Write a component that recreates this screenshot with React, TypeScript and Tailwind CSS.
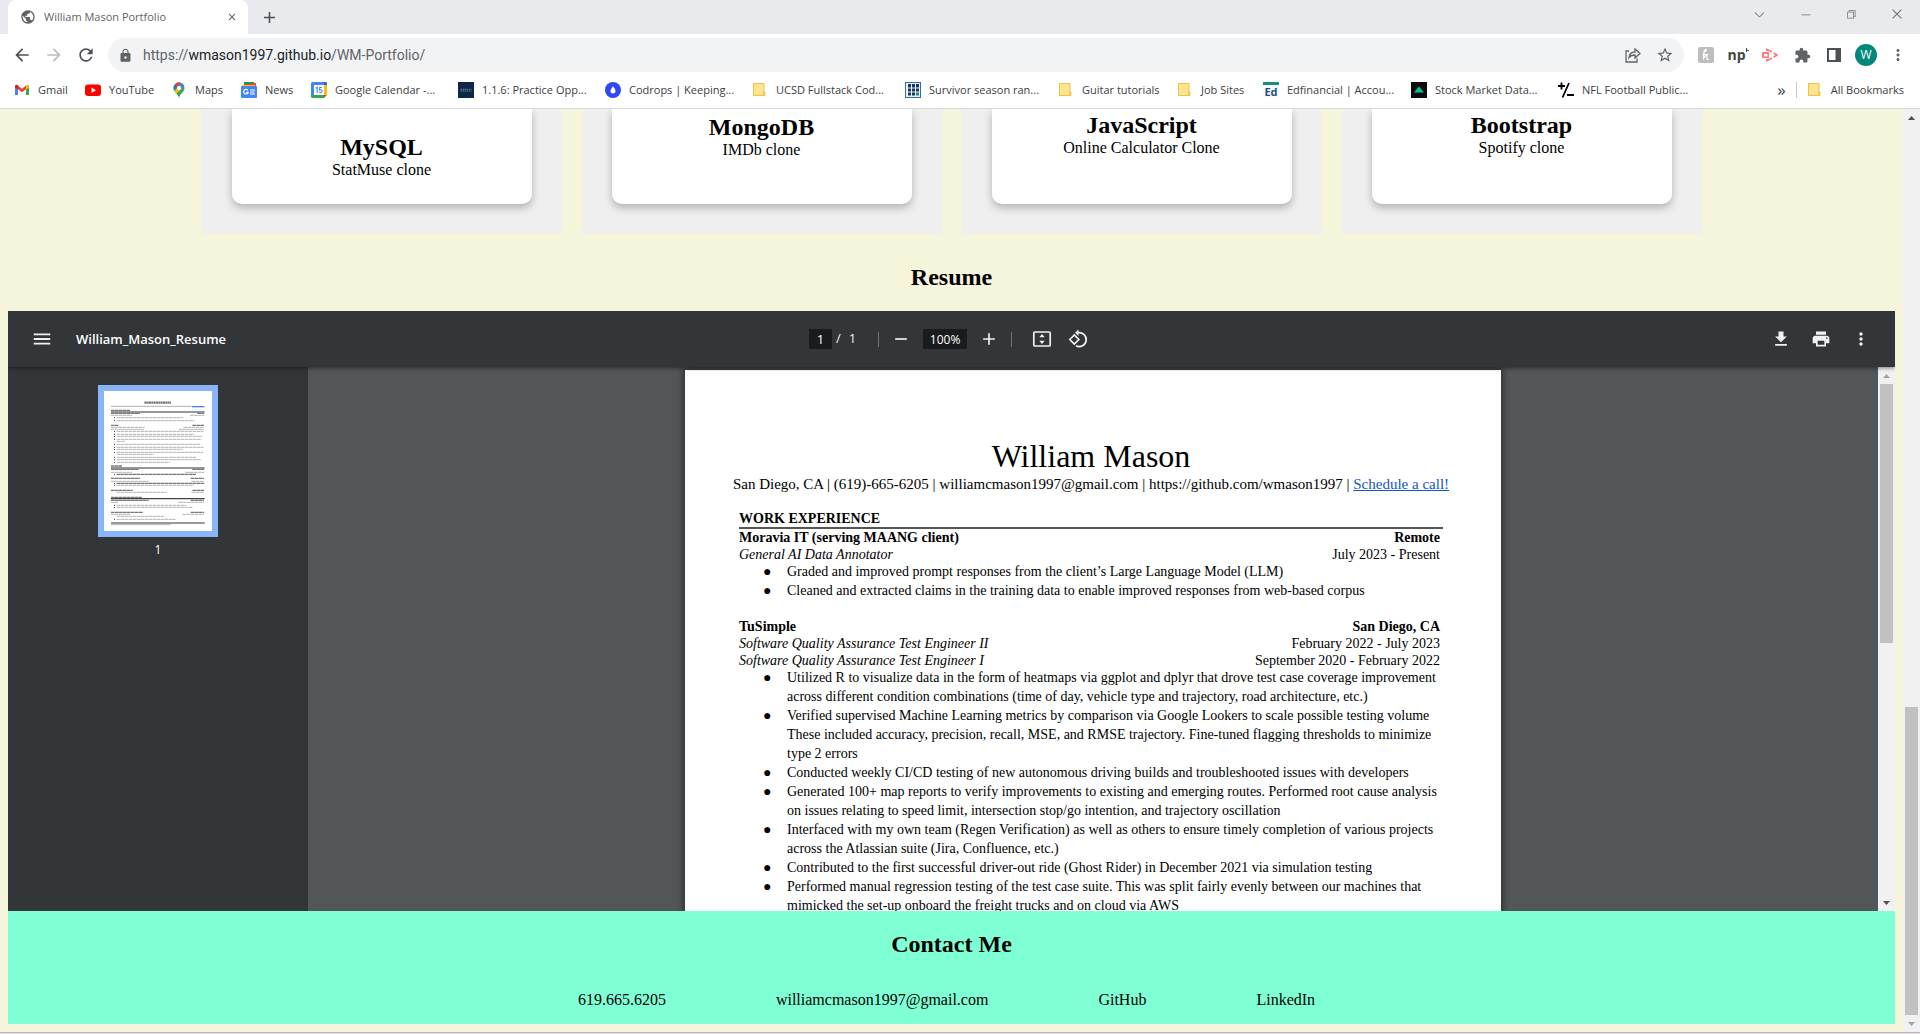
import React from "react";
import { VscChromeClose, VscChromeMinimize, VscChromeRestore, VscChevronDown } from "react-icons/vsc";
import { MdPublic, MdLock, MdArrowBack, MdArrowForward, MdRefresh, MdStarBorder, MdExtension, MdMoreVert, MdClose, MdAdd, MdMenu, MdRemove, MdPrint, MdDownload } from "react-icons/md";

/* ---------- bookmark icons ---------- */

const Gmail = () => (
  <svg width="16" height="16" viewBox="0 0 16 16">
    <path d="M1 4v9h3V7z" fill="#4285f4" />
    <path d="M15 4v9h-3V7z" fill="#34a853" />
    <path d="M1 4.5A1.5 1.5 0 0 1 3.500 3.300L8 6.700l4.500-3.400A1.500 1.500 0 0 1 15 4.500L12 7.200 8 10.200 4 7.200z" fill="#ea4335" />
    <path d="M12 3.700A1.600 1.600 0 0 1 15 4.500V5.500L12 7.600z" fill="#fbbc04" />
    <path d="M1 4.500A1.600 1.600 0 0 1 4 3.700V7.600L1 5.500z" fill="#c5221f" />
  </svg>
);
const YouTube = () => (
  <svg width="16" height="16" viewBox="0 0 16 16">
    <rect y="2.500" width="16" height="11.500" rx="3" fill="#f00" />
    <path d="M6.500 5.500v5.500l4.500-2.700z" fill="#fff" />
  </svg>
);
const Maps = () => (
  <svg width="16" height="16" viewBox="0 0 16 16">
    <path d="M8 .5a5.500 5.500 0 0 1 5.500 5.500c0 4-4.500 5.500-5.500 10C7 11.500 2.500 10 2.500 6A5.500 5.500 0 0 1 8 .5z" fill="#34a853" />
    <path d="M3.800 2.500A5.500 5.500 0 0 1 10 .8L5.500 6z" fill="#ea4335" />
    <path d="M10 .8A5.500 5.500 0 0 1 13.200 4L9 8.500 7 4.500z" fill="#4285f4" />
    <path d="M3.500 9L8.500 4l2 3-5.500 5z" fill="#fbbc04" />
    <path d="M3.800 2.500L6 5 2.900 8A5.500 5.500 0 0 1 3.800 2.500z" fill="#1a73e8" />
    <circle cx="8" cy="6" r="2" fill="#fff" />
  </svg>
);
const News = () => (
  <svg width="16" height="16" viewBox="0 0 16 16">
    <path d="M3 0h10v5H3z" fill="#0c9d58" />
    <path d="M4 2l11-1v5H4z" fill="#ea4335" />
    <path d="M1 3l13 0v4H1z" fill="#ffc107" />
    <rect y="4" width="16" height="12" rx="1" fill="#4285f4" />
    <path d="M6.800 8.300A2.300 2.300 0 1 0 7.200 10.300H5.300M9 8h5M9 10h4.500M9 12h5" fill="none" stroke="#fff" strokeWidth="1.200" />
  </svg>
);
const Calendar = () => (
  <svg width="16" height="16" viewBox="0 0 16 16">
    <path d="M0 1.500A1.500 1.500 0 0 1 1.500 0H14.500A1.500 1.500 0 0 1 16 1.500V3H0z" fill="#4285f4" />
    <path d="M0 2h3v11H0z" fill="#4285f4" />
    <path d="M13 3h3v10h-3z" fill="#fbbc04" />
    <path d="M0 13h13v3H1.500A1.500 1.500 0 0 1 0 14.500z" fill="#34a853" />
    <path d="M13 13h3l-3 3z" fill="#ea4335" />
    <path d="M13 0h1.500A1.500 1.500 0 0 1 16 1.500V3h-3z" fill="#1967d2" />
    <rect x="3" y="3" width="10" height="10" fill="#fff" />
    <path d="M4.700 6.200l1.500-1V11M11 5.500H8.700L8.500 8c2-.8 2.700.2 2.600 1.300-.2 1.600-2.300 1.600-2.900.4" fill="none" stroke="#4285f4" strokeWidth="1.100" />
  </svg>
);
const Practice = () => (
  <svg width="16" height="16" viewBox="0 0 16 16">
    <rect width="16" height="16" fill="#0f2747" />
    <path d="M2.500 7.300h11M2.500 9h11" stroke="#8c9aae" strokeWidth=".8" strokeDasharray="1.500 .6" />
  </svg>
);
const Codrops = () => (
  <svg width="16" height="16" viewBox="0 0 16 16">
    <circle cx="8" cy="8" r="8" fill="#3047f5" />
    <path d="M8 4c1 2 2.500 3.300 2.500 5a2.500 2.500 0 0 1-5 0C5.500 7.300 7 6 8 4z" fill="#fff" />
  </svg>
);
const Folder = () => (
  <svg width="16" height="16" viewBox="0 0 16 16">
    <path d="M1.500 1.500h10.500v8.500h1v3.500h-11.500z" fill="#ffe48f" stroke="#e8c44a" />
    <path d="M11.500 13.500v-3.500h1" fill="none" stroke="#e8c44a" />
  </svg>
);
const Survivor = () => (
  <svg width="16" height="16" viewBox="0 0 16 16">
    <rect width="16" height="16" fill="#2f6bbd" />
    <rect x="1" y="1" width="14" height="14" fill="#f3efe4" />
    <path d="M3 2h3v3.500H3zM7 2h3v3.500H7zM11 2h3v3.500h-3zM3 6.500h3v3H3zM7 6.500h3v3H7zM11 6.500h3v3h-3zM3 10.500h3v3H3zM7 10.500h3v3H7z" fill="#0b3a6b" />
    <path d="M11 10.500h3v3h-3z" fill="#12907f" />
  </svg>
);
const Ed = () => (
  <span className="flex size-4 flex-col bg-slate-50">
    <span className="h-[3px] bg-[#16907a]" />
    <span className="text-center font-['Open_Sans'] text-[11px] leading-[13px] font-bold text-[#1d4f86]">Ed</span>
  </span>
);
const Stock = () => (
  <svg width="16" height="16" viewBox="0 0 16 16">
    <rect width="16" height="16" fill="#0c0c0c" />
    <path d="M8 4.500l5 6H3z" fill="#00c79a" />
  </svg>
);
const Nfl = () => (
  <svg width="16" height="16" viewBox="0 0 16 16">
    <path d="M0 4h7M3.500.5v7M11 1L4.500 15.500M9 13h7" stroke="#000" strokeWidth="1.800" />
  </svg>
);

const bookmarks: { label: string; icon: React.ReactNode; w: string }[] = [
  { label: "Gmail", icon: <Gmail />, w: "w-[71px]" },
  { label: "YouTube", icon: <YouTube />, w: "w-[86px]" },
  { label: "Maps", icon: <Maps />, w: "w-[70px]" },
  { label: "News", icon: <News />, w: "w-[70px]" },
  { label: "Google Calendar -...", icon: <Calendar />, w: "w-[147px]" },
  { label: "1.1.6: Practice Opp...", icon: <Practice />, w: "w-[147px]" },
  { label: "Codrops | Keeping...", icon: <Codrops />, w: "w-[147px]" },
  { label: "UCSD Fullstack Cod...", icon: <Folder />, w: "w-[153px]" },
  { label: "Survivor season ran...", icon: <Survivor />, w: "w-[153px]" },
  { label: "Guitar tutorials", icon: <Folder />, w: "w-[119px]" },
  { label: "Job Sites", icon: <Folder />, w: "w-[86px]" },
  { label: "Edfinancial | Accou...", icon: <Ed />, w: "w-[148px]" },
  { label: "Stock Market Data...", icon: <Stock />, w: "w-[147px]" },
  { label: "NFL Football Public...", icon: <Nfl />, w: "w-[147px]" },
];

function Browser() {
  return (
    <header className="shrink-0 border-b border-[#d5d7da] bg-white font-['Open_Sans',sans-serif] text-[#3c4043]">
      <div className="flex h-[34px] bg-[#e8eaed] pl-2">
        <div className="flex w-60 items-center rounded-t-lg bg-white pr-2.5 pl-3 text-[11px] text-[#5f6368]">
          <MdPublic size={16} />
          <span className="ml-2 flex-1 whitespace-nowrap">William Mason Portfolio</span>
          <button aria-label="Close tab"><MdClose size={12} /></button>
        </div>
        <button aria-label="New tab" className="ml-3 text-[#4d5156]"><MdAdd size={19} /></button>
        <div className="ml-auto flex items-start text-[#707478]">
          {[
            ["Search tabs", <VscChevronDown size={15} />],
            ["Minimise", <VscChromeMinimize size={13} />],
            ["Restore", <VscChromeRestore size={12} />],
            ["Close", <VscChromeClose size={14} />],
          ].map(([n, i]) => (
            <button key={n as string} aria-label={n as string} className="flex h-7 w-[46px] items-center justify-center">{i}</button>
          ))}
        </div>
      </div>
      <div className="flex h-[38px] items-center pr-1.5">
        <div className="flex w-[108px] gap-3 pt-1 pl-3 text-[#4d5156]">
          <button aria-label="Back"><MdArrowBack size={20} /></button>
          <button aria-label="Forward" className="text-[#babcbe]"><MdArrowForward size={20} /></button>
          <button aria-label="Reload"><MdRefresh size={20} /></button>
        </div>
        <div className="mt-1 flex h-[34px] flex-1 items-center rounded-full bg-[#f1f3f4] pr-2.5 pl-2.5 text-[#5f6368]">
          <MdLock size={15} />
          <a href="#top" className="ml-2.5 flex-1 font-['Roboto',sans-serif] text-[14px]">
            https://<span className="text-[#202124]">wmason1997.github.io</span>/WM-Portfolio/
          </a>
          <button aria-label="Share" className="mr-3.5">
            <svg width="18" height="18" viewBox="0 0 18 18" fill="none" stroke="currentColor" strokeWidth="1.300">
              <path d="M5 5H2v11h11v-3.500M5 11.500c.5-4 3-5.500 6-5.500V3l5 4.500-5 4.500V9c-2.500 0-4.500.5-6 2.500z" />
            </svg>
          </button>
          <button aria-label="Bookmark this page"><MdStarBorder size={18} /></button>
        </div>
        <div className="ml-1.5 flex pt-1 text-[#5f6368]">
          <button aria-label="Honey" className="flex w-8 items-center justify-center">
            <svg width="16" height="16" viewBox="0 0 16 16">
              <rect width="16" height="16" rx="2" fill="#bdbdbd" />
              <path d="M5 5c2 0 4-1 3-2.500S5.500 6 5.500 12.500C6 9 9.500 6.500 9 9s-.5 4 2 3M4.500 7.500h6" fill="none" stroke="#fff" strokeWidth="1.200" />
            </svg>
          </button>
          <button aria-label="np extension" className="flex w-8 items-center justify-center font-['Open_Sans'] text-[14px] leading-4 font-bold text-[#444]">
            np
            <svg width="3" height="14" viewBox="0 0 3 14"><path d="M.5 0v4M0 1.500l3 1.500" stroke="#444" /></svg>
          </button>
          <button aria-label="Recorder" className="flex w-8 items-center justify-center">
            <svg width="16" height="16" viewBox="0 0 16 16">
              <path d="M5 4V2.500L10 5M11.500 6L15 8l-3.500 2M10 11l-5 2.500V12" fill="none" stroke="#ff7b7b" strokeWidth="1.800" />
              <path d="M0 5h7v6H0zM2 7v2.500h3.500V7z" fillRule="evenodd" fill="#ff7b7b" />
            </svg>
          </button>
          <button aria-label="Extensions" className="flex w-8 items-center justify-center"><MdExtension size={17} /></button>
          <button aria-label="Side panel" className="flex w-8 items-center justify-center">
            <svg width="14" height="14" viewBox="0 0 14 14"><path d="M0 0h14v14H0zM2 2v10h6.500V2z" fillRule="evenodd" fill="#4d5156" /></svg>
          </button>
          <button aria-label="Profile" className="mx-[5px] size-[22px] rounded-full bg-[#00897b] text-[12px] text-white">W</button>
          <button aria-label="Menu" className="flex w-8 items-center justify-center"><MdMoreVert size={18} /></button>
        </div>
      </div>
      <nav className="flex h-9 items-center pl-3.5 text-[11px]">
        {bookmarks.map((b) => (
          <a key={b.label} href="#bookmark" className={`flex shrink-0 items-center gap-2 whitespace-nowrap ${b.w}`}>
            {b.icon}
            <span>{b.label}</span>
          </a>
        ))}
        <button aria-label="More bookmarks" className="ml-auto text-[17px] leading-4">»</button>
        <span className="mx-2.5 h-4 w-px bg-[#c8cacd]" />
        <a href="#all" className="mr-4 flex items-center gap-2 whitespace-nowrap"><Folder />All Bookmarks</a>
      </nav>
    </header>
  );
}

/* ---------- portfolio ---------- */

const cards = [
  { title: "MySQL", sub: "StatMuse clone", pad: "pt-6" },
  { title: "MongoDB", sub: "IMDb clone", pad: "pt-1" },
  { title: "JavaScript", sub: "Online Calculator Clone", pad: "pt-0.5" },
  { title: "Bootstrap", sub: "Spotify clone", pad: "pt-0.5" },
];

const mini: [number, number, number, number][] = [
  [331, 333, 390, 1], [353, 350, 550, 0], [362, 350, 583, 0], [376, 333, 355, 1], [382, 333, 434, 0], [388, 333, 432, 0],
  [394, 350, 610, 0], [403, 350, 582, 0], [409, 350, 607, 0], [418, 350, 604, 0], [424, 350, 376, 0], [433, 350, 600, 0],
  [442, 350, 610, 0], [448, 350, 548, 0], [457, 350, 610, 0], [463, 350, 462, 0], [472, 350, 588, 0], [479, 350, 604, 0], [487, 350, 510, 0],
  [498, 333, 366, 1], [508, 333, 416, 1], [517, 333, 396, 0], [523, 350, 588, 1], [535, 333, 420, 1], [544, 333, 446, 0],
  [550, 350, 614, 1], [556, 350, 582, 0], [571, 333, 398, 1], [577, 350, 500, 0], [592, 333, 425, 1], [601, 333, 446, 1],
  [607, 333, 354, 0], [616, 350, 558, 0], [622, 350, 578, 0], [637, 333, 428, 1], [643, 333, 390, 0], [649, 350, 494, 0], [658, 350, 527, 0],
  [674, 333, 512, 0], [340, 333, 420, 1], [340, 592, 612, 1], [346, 333, 396, 0], [346, 570, 612, 0], [376, 577, 612, 1],
  [382, 551, 612, 0], [388, 537, 612, 0], [508, 577, 612, 1], [517, 556, 612, 0], [535, 572, 612, 1], [544, 574, 612, 0],
  [571, 577, 612, 1], [577, 574, 612, 0], [601, 572, 612, 1], [607, 535, 612, 0], [637, 572, 612, 1], [643, 547, 612, 0],
];

function Thumbnail() {
  return (
    <svg viewBox="312 273 324 420" className="block h-[140px] w-[108px] bg-white">
      <path d="M433 308h80" stroke="#777" strokeWidth="7" strokeDasharray="6 1" />
      <path d="M333 319h242" stroke="#aaa" strokeWidth="3" strokeDasharray="11 1" />
      <path d="M576 320h37" stroke="#4b83e6" strokeWidth="4" />
      <path d="M333 336h281M333 504h281M333 669h281" stroke="#777" strokeWidth="5" />
      <path d="M333 596h281" stroke="#444" strokeWidth="4" />
      {mini.map(([y, a, b, t], i) => (
        <path key={i} d={`M${a} ${y}H${b}`} stroke={t ? "#777" : "#b4b4b4"} strokeWidth={t ? 4 : 3} strokeDasharray="11 1" />
      ))}
      {mini.filter(([, a, b]) => a === 350 && b > 500).map(([y], i) => (
        <path key={i} d={`M342 ${y}h3`} stroke="#333" strokeWidth="3" />
      ))}
    </svg>
  );
}

function Row({ left, right, style }: { left: string; right: string; style: string }) {
  return (
    <div className="flex justify-between pr-[3px] leading-[17px]">
      <span className={style}>{left}</span>
      <span className={style === "italic" ? "" : style}>{right}</span>
    </div>
  );
}

function Bullets({ items }: { items: string[][] }) {
  return (
    <ul className="-mt-px leading-[19px] whitespace-nowrap">
      {items.map((lines) => (
        <li key={lines[0]} className="flex">
          <span className="w-12 shrink-0 pl-6">●</span>
          <span>
            {lines.map((l, i) => (
              <React.Fragment key={l}>{i > 0 && <br />}{l}</React.Fragment>
            ))}
          </span>
        </li>
      ))}
    </ul>
  );
}

function Sheet() {
  return (
    <article className="mt-[3px] w-[816px] shrink-0 bg-white pt-[67px] pr-[58px] pl-[54px] text-[14px] text-black shadow-[0_0_6px_2px_rgba(0,0,0,0.45)]">
      <h3 className="text-center text-[32px] leading-[39px]">William Mason</h3>
      <p className="-mx-2 text-center text-[15px] leading-[17px] whitespace-nowrap">
        San Diego, CA | (619)-665-6205 | williamcmason1997@gmail.com | https://github.com/wmason1997 |{" "}
        <a href="#call" className="text-[#1155cc] underline">Schedule a call!</a>
      </p>
      <h4 className="mt-[17px] border-b-2 border-[#555] leading-[17px] font-bold">WORK EXPERIENCE</h4>
      <Row left="Moravia IT (serving MAANG client)" right="Remote" style="font-bold" />
      <Row left="General AI Data Annotator" right="July 2023 - Present" style="italic" />
      <Bullets
        items={[
          ["Graded and improved prompt responses from the client’s Large Language Model (LLM)"],
          ["Cleaned and extracted claims in the training data to enable improved responses from web-based corpus"],
        ]}
      />
      <div className="h-[18px]" />
      <Row left="TuSimple" right="San Diego, CA" style="font-bold" />
      <Row left="Software Quality Assurance Test Engineer II" right="February 2022 - July 2023" style="italic" />
      <Row left="Software Quality Assurance Test Engineer I" right="September 2020 - February 2022" style="italic" />
      <Bullets
        items={[
          ["Utilized R to visualize data in the form of heatmaps via ggplot and dplyr that drove test case coverage improvement", "across different condition combinations (time of day, vehicle type and trajectory, road architecture, etc.)"],
          ["Verified supervised Machine Learning metrics by comparison via Google Lookers to scale possible testing volume", "These included accuracy, precision, recall, MSE, and RMSE trajectory. Fine-tuned flagging thresholds to minimize", "type 2 errors"],
          ["Conducted weekly CI/CD testing of new autonomous driving builds and troubleshooted issues with developers"],
          ["Generated 100+ map reports to verify improvements to existing and emerging routes. Performed root cause analysis", "on issues relating to speed limit, intersection stop/go intention, and trajectory oscillation"],
          ["Interfaced with my own team (Regen Verification) as well as others to ensure timely completion of various projects", "across the Atlassian suite (Jira, Confluence, etc.)"],
          ["Contributed to the first successful driver-out ride (Ghost Rider) in December 2021 via simulation testing"],
          ["Performed manual regression testing of the test case suite. This was split fairly evenly between our machines that", "mimicked the set-up onboard the freight trucks and on cloud via AWS"],
        ]}
      />
    </article>
  );
}

const Up = ({ c }: { c: string }) => <svg width="7" height="4" viewBox="0 0 7 4"><path d="M0 4L3.500 0 7 4z" fill={c} /></svg>;
const Down = ({ c }: { c: string }) => <svg width="7" height="4" viewBox="0 0 7 4"><path d="M0 0h7L3.500 4z" fill={c} /></svg>;

function PdfViewer() {
  return (
    <section className="flex h-[600px] flex-col overflow-hidden bg-[#525659]">
      <div className="z-10 flex h-14 shrink-0 items-center bg-[#323639] px-6 font-['Open_Sans',sans-serif] text-[13px] text-[#f1f1f1] shadow-[0_1px_4px_rgba(0,0,0,0.5)]">
        <div className="flex flex-1 items-center">
          <button aria-label="Menu"><MdMenu size={20} className="scale-110" /></button>
          <span className="ml-6 pt-0.5 font-semibold text-white">William_Mason_Resume</span>
        </div>
        <div className="flex items-center gap-1.5">
          <input aria-label="Page number" defaultValue="1" className="h-5 w-[23px] bg-[#191b1c] text-center text-white" />
          <span className="-ml-0.5">/</span>
          <span className="mr-4 ml-0.5">1</span>
          <span className="h-[15px] w-px bg-[#707375]" />
          <button aria-label="Zoom out" className="flex w-8 justify-center"><MdRemove size={20} /></button>
          <input aria-label="Zoom" defaultValue="100%" className="h-5 w-11 bg-[#191b1c] text-center text-[12px] text-white" />
          <button aria-label="Zoom in" className="flex w-8 justify-center"><MdAdd size={20} /></button>
          <span className="h-[15px] w-px bg-[#707375]" />
          <div className="ml-2 flex gap-1">
            <button aria-label="Fit to page" className="flex w-8 justify-center">
              <svg width="20" height="20" viewBox="0 0 20 20">
                <rect x="1.800" y="3" width="16.400" height="14" rx="1" fill="none" stroke="#f1f1f1" strokeWidth="1.700" />
                <path d="M10 5l2.700 3.200H7.300zM10 15l2.700-3.200H7.300z" fill="#f1f1f1" />
              </svg>
            </button>
            <button aria-label="Rotate" className="flex w-8 justify-center">
              <svg width="20" height="20" viewBox="0 0 20 20" fill="none" stroke="#f1f1f1" strokeWidth="1.700">
                <path d="M1.800 10.500L6.300 6l4.500 4.500L6.300 15zM9.500 3.800a7 7 0 1 1-1.500 13" />
                <path d="M10.500.500V7L7 3.800z" fill="#f1f1f1" stroke="none" />
              </svg>
            </button>
          </div>
        </div>
        <div className="flex flex-1 justify-end gap-5">
          <button aria-label="Download"><MdDownload size={20} /></button>
          <button aria-label="Print"><MdPrint size={20} /></button>
          <button aria-label="More actions"><MdMoreVert size={20} /></button>
        </div>
      </div>
      <div className="flex min-h-0 flex-1">
        <aside className="flex w-[300px] shrink-0 flex-col items-center bg-[#323639] pt-[18px] font-['Open_Sans',sans-serif] text-[12px] text-white">
          <div className="border-6 border-[#8ab4f8]"><Thumbnail /></div>
          <span className="mt-1">1</span>
        </aside>
        <div className="flex flex-1 justify-center overflow-hidden">
          <Sheet />
        </div>
        <div className="flex w-[17px] shrink-0 flex-col items-center bg-[#f1f1f1]">
          <span className="flex h-[17px] items-center"><Up c="#a3a3a3" /></span>
          <span className="h-[259px] w-[13px] bg-[#c1c1c1]" />
          <span className="mt-auto flex h-[17px] items-center"><Down c="#505050" /></span>
        </div>
      </div>
    </section>
  );
}

export default function App() {
  return (
    <div className="flex h-screen flex-col overflow-hidden bg-[#f5f5dc] font-['Liberation_Serif',serif] text-black">
      <Browser />
      <div className="flex min-h-0 flex-1">
        <main className="flex-1 overflow-hidden px-2">
          <div className="flex justify-center gap-5">
            {cards.map((c) => (
              <div key={c.title} className="h-[125px] w-[360px] overflow-hidden bg-[#efefef] px-[30px] pb-[30px]">
                <div className={`h-[95px] rounded-b-[10px] bg-white text-center shadow-[0_4px_8px_rgba(0,0,0,0.25)] ${c.pad}`}>
                  <h2 className="text-[24px] leading-[28px] font-bold">{c.title}</h2>
                  <p className="text-[16px] leading-[18px]">{c.sub}</p>
                </div>
              </div>
            ))}
          </div>
          <h2 className="pt-[29px] pb-5 text-center text-[24px] leading-[28px] font-bold">Resume</h2>
          <PdfViewer />
          <footer className="h-[113px] bg-[#7fffd4] pt-[19px]">
            <h2 className="text-center text-[24px] leading-[28px] font-bold">Contact Me</h2>
            <div className="flex justify-center gap-[110px] pt-8 pr-2.5 text-[16px] leading-[20px]">
              <a href="tel:6196656205">619.665.6205</a>
              <a href="mailto:williamcmason1997@gmail.com">williamcmason1997@gmail.com</a>
              <a href="#github">GitHub</a>
              <a href="#linkedin">LinkedIn</a>
            </div>
          </footer>
        </main>
        <div className="flex w-[17px] shrink-0 flex-col items-center bg-[#f1f1f1]">
          <span className="flex h-[17px] items-center"><Up c="#505050" /></span>
          <span className="mt-auto h-[308px] w-[13px] bg-[#c1c1c1]" />
          <span className="flex h-[17px] items-center"><Down c="#a3a3a3" /></span>
        </div>
      </div>
      <div className="h-0.5 shrink-0 border-t border-[#b5b3b6] bg-[#eadfe6]" />
    </div>
  );
}
